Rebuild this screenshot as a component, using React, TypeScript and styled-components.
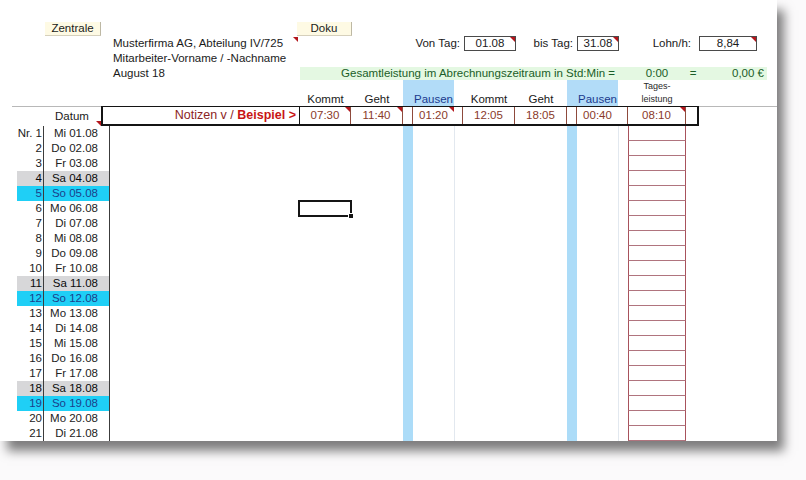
import React from 'react';
import styled, { createGlobalStyle } from 'styled-components';

const GlobalStyle = createGlobalStyle`
  html, body { margin: 0; padding: 0; background: #fbfafb; }
  body { font-family: "Liberation Sans", Arial, sans-serif; color: #1a1a1a; font-size: 11.5px; }
  #root { width: 806px; height: 480px; overflow: hidden; }
`;

const COLS = '17px 26px 67px 190px 51px 52px 10px 41px 9px 52px 52px 10px 41px 10px 58px 1fr';

const Sheet = styled.div`
  position: relative;
  width: 777px;
  height: 441px;
  background: #fff;
  box-shadow: 7px 10px 10px rgba(0, 0, 0, 0.5);
  display: flex;
  flex-direction: column;
`;

const ButtonRow = styled.div`
  display: flex;
  padding-top: 22px;
  height: 14px;
`;

const SheetButton = styled.div<{ $left: number; $width: number }>`
  margin-left: ${p => p.$left}px;
  width: ${p => p.$width}px;
  height: 14px;
  box-sizing: border-box;
  background: #fefae4;
  border-right: 1px solid #bdb8a4;
  border-bottom: 1px solid #d6d0bc;
  font-size: 11.5px;
  line-height: 13px;
  text-align: center;
  color: #1a1a1a;
`;

const InfoGrid = styled.div`
  display: grid;
  grid-template-columns: 113px 187px 1fr;
  grid-template-rows: 15px 15px 15px;
`;

const InfoLine = styled.div<{ $row: number }>`
  grid-column: 2;
  grid-row: ${p => p.$row};
  position: relative;
  line-height: 15px;
  white-space: nowrap;
  color: #1a1a1a;
`;

const Marker = styled.span<{ $right?: number; $top?: number }>`
  position: absolute;
  top: ${p => p.$top ?? 0}px;
  right: ${p => p.$right ?? 0}px;
  width: 0;
  height: 0;
  border-top: 5px solid #b3161c;
  border-left: 5px solid transparent;
`;

const InputsRow = styled.div`
  grid-column: 3;
  grid-row: 1;
  display: flex;
  align-items: center;
`;

const FieldLabel = styled.div<{ $width: number }>`
  width: ${p => p.$width}px;
  text-align: right;
  padding-right: 2px;
  box-sizing: border-box;
  line-height: 15px;
  white-space: nowrap;
`;

const FieldBox = styled.div<{ $left: number; $width: number }>`
  position: relative;
  margin-left: ${p => p.$left}px;
  width: ${p => p.$width}px;
  height: 15px;
  box-sizing: border-box;
  border: 1px solid #4a4a4a;
  text-align: center;
  line-height: 13px;
  background: #fff;
`;

const GreenBar = styled.div`
  grid-column: 3;
  grid-row: 3;
  width: 467px;
  height: 13px;
  margin-top: 1px;
  background: #e4f8e2;
  display: grid;
  grid-template-columns: 318px 10px 58px 14px 1fr;
  color: #1a5e28;
  line-height: 13px;
  white-space: nowrap;
`;

const GreenText = styled.div<{ $align: string; $col: number }>`
  grid-column: ${p => p.$col};
  text-align: ${p => p.$align};
  padding-right: ${p => (p.$align === 'right' ? 3 : 0)}px;
`;

const HeadRow = styled.div`
  display: grid;
  grid-template-columns: ${COLS};
  height: 26px;
  margin-top: -1px;
  align-items: end;
`;

const HeadCell = styled.div<{ $col: number }>`
  grid-column: ${p => p.$col};
  text-align: center;
  line-height: 13px;
  padding-bottom: 1px;
  white-space: nowrap;
  color: #1a1a1a;
`;

const HeadBand = styled.div<{ $col: number }>`
  grid-column: ${p => p.$col} / span 2;
  align-self: stretch;
  background: #b2dcf8;
  padding-left: 10px;
  display: flex;
  align-items: flex-end;
  justify-content: center;
  color: #1a3a8e;
  line-height: 13px;
  padding-bottom: 1px;
`;

const SmallHead = styled.div`
  grid-column: 15;
  text-align: center;
  font-size: 9px;
  line-height: 13px;
  color: #2a2a2a;
  padding-bottom: 1px;
`;

const ExampleRow = styled.div`
  display: flex;
  height: 20px;
  margin-left: 12px;
  padding-left: 31px;
  box-shadow: inset 0 1px 0 #b8b8b8;
`;

const DatumCell = styled.div`
  position: relative;
  width: 58px;
  text-align: center;
  line-height: 20px;
  color: #1a1a1a;
`;

const ExampleBox = styled.div`
  display: flex;
  width: 598px;
  height: 20px;
  box-sizing: border-box;
  border: 2px solid #141414;
  border-top-width: 1.5px;
`;

const NotesCell = styled.div`
  width: 197px;
  box-sizing: border-box;
  border-right: 1px solid #141414;
  text-align: right;
  padding-right: 3px;
  font-size: 12.5px;
  line-height: 17px;
  color: #8b2424;
  white-space: nowrap;
`;

const Bold = styled.b`
  color: #c81414;
`;

const ValueCell = styled.div<{ $width: number; $line?: boolean }>`
  position: relative;
  width: ${p => p.$width}px;
  box-sizing: border-box;
  border-right: ${p => (p.$line ? '1px solid #8e4a3c' : 'none')};
  text-align: center;
  line-height: 17px;
  color: #8a3a2a;
  font-size: 11.5px;
`;

const Body = styled.div`
  display: flex;
  flex-direction: column;
`;

type Kind = 'week' | 'sa' | 'so';

const DataRow = styled.div`
  display: grid;
  grid-template-columns: ${COLS};
  height: 15px;
`;

const bg = (k: Kind) => (k === 'sa' ? '#d7d7d9' : k === 'so' ? '#1fcff6' : 'transparent');
const fg = (k: Kind) => (k === 'sa' ? '#0a0a0a' : k === 'so' ? '#1b3f8c' : '#222');

const NrCell = styled.div<{ $kind: Kind }>`
  grid-column: 2;
  background: ${p => bg(p.$kind)};
  color: ${p => fg(p.$kind)};
  text-align: right;
  padding-right: 1px;
  line-height: 15px;
  white-space: nowrap;
`;

const DateCell = styled.div<{ $kind: Kind }>`
  grid-column: 3;
  background: ${p => bg(p.$kind)};
  color: ${p => fg(p.$kind)};
  border-left: 1px solid #3c3c3c;
  border-right: 1px solid #3c3c3c;
  text-align: right;
  padding-right: 11px;
  line-height: 15px;
  white-space: nowrap;
`;

const BandCell = styled.div<{ $col: number }>`
  grid-column: ${p => p.$col};
  background: #acdcf8;
`;

const FaintCell = styled.div<{ $col: number }>`
  grid-column: ${p => p.$col};
  border-left: 1px solid #e2e8ef;
`;

const TagesCell = styled.div`
  grid-column: 15;
  border-left: 1px solid #a8525c;
  border-right: 1px solid #a8525c;
  border-bottom: 1px solid #b0747e;
`;

const Selection = styled.div`
  position: absolute;
  left: 298px;
  top: 200px;
  width: 54px;
  height: 17px;
  box-sizing: border-box;
  border: 2px solid #151515;
`;

const Handle = styled.span`
  position: absolute;
  right: -4px;
  bottom: -4px;
  width: 4px;
  height: 4px;
  background: #151515;
  border: 1px solid #fff;
`;

const DAYS = ['Mo', 'Di', 'Mi', 'Do', 'Fr', 'Sa', 'So'];

const rows = Array.from({ length: 21 }, (_, i) => {
  const d = i + 1;
  const name = DAYS[(i + 2) % 7];
  const kind: Kind = name === 'Sa' ? 'sa' : name === 'So' ? 'so' : 'week';
  return { nr: d === 1 ? 'Nr. 1' : String(d), date: `${name} ${String(d).padStart(2, '0')}.08`, kind };
});

export default function App() {
  return (
    <>
      <GlobalStyle />
      <Sheet>
        <ButtonRow>
          <SheetButton $left={45} $width={56}>Zentrale</SheetButton>
          <SheetButton $left={196} $width={55}>Doku</SheetButton>
        </ButtonRow>
        <InfoGrid>
          <InfoLine $row={1}>
            Musterfirma AG, Abteilung IV/725
            <Marker $right={2} $top={1} />
          </InfoLine>
          <InfoLine $row={2}>Mitarbeiter-Vorname / -Nachname</InfoLine>
          <InfoLine $row={3}>August 18</InfoLine>
          <InputsRow>
            <FieldLabel $width={162}>Von Tag:</FieldLabel>
            <FieldBox $left={2} $width={52}>01.08<Marker /></FieldBox>
            <FieldLabel $width={59}>bis Tag:</FieldLabel>
            <FieldBox $left={2} $width={42}>31.08<Marker /></FieldBox>
            <FieldLabel $width={74}>Lohn/h:</FieldLabel>
            <FieldBox $left={6} $width={58}>8,84<Marker /></FieldBox>
          </InputsRow>
          <GreenBar>
            <GreenText $col={1} $align="right">Gesamtleistung im Abrechnungszeitraum in Std:Min =</GreenText>
            <GreenText $col={3} $align="center">0:00</GreenText>
            <GreenText $col={4} $align="center">=</GreenText>
            <GreenText $col={5} $align="right">0,00 €</GreenText>
          </GreenBar>
        </InfoGrid>
        <HeadRow>
          <HeadCell $col={5}>Kommt</HeadCell>
          <HeadCell $col={6}>Geht</HeadCell>
          <HeadBand $col={7}>Pausen</HeadBand>
          <HeadCell $col={10}>Kommt</HeadCell>
          <HeadCell $col={11}>Geht</HeadCell>
          <HeadBand $col={12}>Pausen</HeadBand>
          <SmallHead>Tages-<br />leistung</SmallHead>
        </HeadRow>
        <ExampleRow>
          <DatumCell>
            Datum
            <Marker $right={0} $top={15} />
          </DatumCell>
          <ExampleBox>
            <NotesCell>
              Notizen v / <Bold>Beispiel &gt;</Bold>
            </NotesCell>
            <ValueCell $width={51} $line>07:30<Marker /></ValueCell>
            <ValueCell $width={52} $line>11:40<Marker /></ValueCell>
            <ValueCell $width={10} $line />
            <ValueCell $width={41}>01:20<Marker /></ValueCell>
            <ValueCell $width={9} $line />
            <ValueCell $width={52} $line>12:05</ValueCell>
            <ValueCell $width={52} $line>18:05</ValueCell>
            <ValueCell $width={10} $line />
            <ValueCell $width={41}>00:40</ValueCell>
            <ValueCell $width={10} $line />
            <ValueCell $width={58} $line>08:10<Marker /></ValueCell>
          </ExampleBox>
        </ExampleRow>
        <Body>
          {rows.map(r => (
            <DataRow key={r.date}>
              <NrCell $kind={r.kind}>{r.nr}</NrCell>
              <DateCell $kind={r.kind}>{r.date}</DateCell>
              <BandCell $col={7} />
              <FaintCell $col={9} />
              <BandCell $col={12} />
              <FaintCell $col={14} />
              <TagesCell />
            </DataRow>
          ))}
        </Body>
        <Selection>
          <Handle />
        </Selection>
      </Sheet>
    </>
  );
}
